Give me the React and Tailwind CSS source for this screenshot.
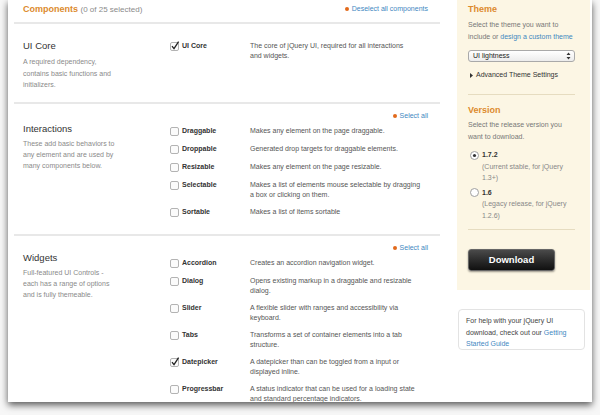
import React from 'react';

const interactions = [
  { name: 'Draggable', desc: ['Makes any element on the page draggable.'] },
  { name: 'Droppable', desc: ['Generated drop targets for draggable elements.'] },
  { name: 'Resizable', desc: ['Makes any element on the page resizable.'] },
  { name: 'Selectable', desc: ['Makes a list of elements mouse selectable by dragging', 'a box or clicking on them.'] },
  { name: 'Sortable', desc: ['Makes a list of items sortable'] },
];

const widgets = [
  { name: 'Accordion', desc: ['Creates an accordion navigation widget.'] },
  { name: 'Dialog', desc: ['Opens existing markup in a draggable and resizable', 'dialog.'] },
  { name: 'Slider', desc: ['A flexible slider with ranges and accessibility via', 'keyboard.'] },
  { name: 'Tabs', desc: ['Transforms a set of container elements into a tab', 'structure.'] },
  { name: 'Datepicker', checked: true, desc: ['A datepicker than can be toggled from a input or', 'displayed inline.'] },
  { name: 'Progressbar', desc: ['A status indicator that can be used for a loading state', 'and standard percentage indicators.'] },
];

const Checkbox = ({ checked }) => (
  <svg width="10" height="10" viewBox="0 0 10 10" className="shrink-0">
    <rect x="0.5" y="1.5" width="8" height="8" rx="1.5" fill="#fbfbfb" stroke="#b3b3b3" />
    {checked && <path d="M2 5.2 L4 7.6 L8.6 0.6" fill="none" stroke="#222" strokeWidth="1.3" />}
  </svg>
);

const Radio = ({ checked }) => (
  <svg width="9" height="9" viewBox="0 0 9 9" className="shrink-0">
    <circle cx="4.5" cy="4.5" r="4" fill="#fff" stroke="#a0a0a0" />
    {checked && <circle cx="4.5" cy="4.5" r="1.6" fill="#333" />}
  </svg>
);

const Item = ({ item }) => (
  <div className="flex items-start min-h-[11px]">
    <div className="w-[80px] h-[10px] flex items-center gap-[2px]">
      <Checkbox checked={item.checked} />
      <span className="font-bold text-[#333] text-[7px]">{item.name}</span>
    </div>
    <div className="leading-[10px] text-[#555] whitespace-nowrap">
      {item.desc.map((d) => (
        <div key={d}>{d}</div>
      ))}
    </div>
  </div>
);

const SelectAll = ({ label }) => (
  <div className="h-[10px] flex items-center justify-end gap-[3px] pr-[12px]">
    <span className="w-[4px] h-[4px] rounded-full bg-[#e2691b]" />
    <span className="text-[#3f88bf] leading-[10px]">{label}</span>
  </div>
);

const Divider = () => <div className="h-[2px] bg-[#e8e8e8]" />;

export default function App() {
  return (
    <div className="w-[600px] h-[415px] bg-[#f7f7f7] overflow-hidden font-['Liberation_Sans',Arial,sans-serif] text-[7px]">
      <div className="ml-[8px] w-[584px] h-[402px] bg-white shadow-[0_3px_7px_rgba(0,0,0,0.65)] flex overflow-hidden">
        {/* Main column */}
        <div className="w-[449px] pl-[6px]">
          <div className="w-[426px]">
            <div className="h-[22px] pl-[9px] flex justify-between items-start pt-[3px]">
              <div className="text-[9px] leading-[12px]">
                <span className="font-bold text-[#dc8a2e]">Components</span>{' '}
                <span className="text-[#8a8a8a] text-[8px]">(0 of 25 selected)</span>
              </div>
              <div className="pt-[1px]">
                <SelectAll label="Deselect all components" />
              </div>
            </div>
            <Divider />

            {/* UI Core */}
            <div className="h-[78px] pt-[16px] flex">
              <div className="w-[156px] pl-[9px]">
                <div className="text-[9.5px] leading-[12px] text-[#333]">UI Core</div>
                <div className="mt-[4px] leading-[11.5px] text-[#8a8a8a]">
                  A required dependency,<br />contains basic functions and<br />initializers.
                </div>
              </div>
              <div className="pt-px">
                <Item item={{ name: 'UI Core', checked: true, desc: ['The core of jQuery UI, required for all interactions', 'and widgets.'] }} />
              </div>
            </div>
            <Divider />

            {/* Interactions */}
            <div className="h-[130px] pt-[7px]">
              <SelectAll label="Select all" />
              <div className="mt-[2px] flex">
                <div className="w-[156px] pl-[9px]">
                  <div className="text-[9.5px] leading-[12px] text-[#333]">Interactions</div>
                  <div className="mt-[3px] leading-[11px] text-[#8a8a8a]">
                    These add basic behaviors to<br />any element and are used by<br />many components below.
                  </div>
                </div>
                <div className="pt-[3px] flex flex-col gap-[7px]">
                  {interactions.map((it) => (
                    <Item key={it.name} item={it} />
                  ))}
                </div>
              </div>
            </div>
            <Divider />

            {/* Widgets */}
            <div className="pt-[7px]">
              <SelectAll label="Select all" />
              <div className="-mt-[1px] flex">
                <div className="w-[156px] pl-[9px]">
                  <div className="text-[9.5px] leading-[12px] text-[#333]">Widgets</div>
                  <div className="mt-[3px] leading-[11px] text-[#8a8a8a]">
                    Full-featured UI Controls -<br />each has a range of options<br />and is fully themeable.
                  </div>
                </div>
                <div className="pt-[6px] flex flex-col gap-[7px]">
                  {widgets.map((it) => (
                    <Item key={it.name} item={it} />
                  ))}
                </div>
              </div>
            </div>
          </div>
        </div>

        {/* Sidebar */}
        <div className="w-[133px]">
          <div className="h-[290px] bg-[#fcf6e4] pl-[11px] pr-[15px] pt-[3px]">
            <div className="text-[9px] leading-[12px] font-bold text-[#dc8a2e]">Theme</div>
            <div className="mt-[4px] leading-[12px] text-[#777]">
              Select the theme you want to<br />include or{' '}
              <span className="text-[#3f88bf]">design a custom theme</span>
            </div>
            <div className="mt-[7px] h-[12px] rounded-[3px] border border-[#a9a9a9] bg-gradient-to-b from-white to-[#ececec] flex items-center justify-between pl-[4px] pr-[3px]">
              <span className="text-[#222] leading-[10px]">UI lightness</span>
              <svg width="5" height="8" viewBox="0 0 5 8">
                <path d="M0.5 3 L2.5 0.5 L4.5 3 Z M0.5 5 L2.5 7.5 L4.5 5 Z" fill="#333" />
              </svg>
            </div>
            <div className="mt-[7px] h-[12px] flex items-center gap-[3px] pl-[2px] text-[#333]">
              <svg width="3" height="5" viewBox="0 0 3 5">
                <path d="M0 0 L3 2.5 L0 5 Z" fill="#333" />
              </svg>
              <span>Advanced Theme Settings</span>
            </div>
            <div className="mt-[13px] h-px bg-[#e6dcc0]" />
            <div className="mt-[9px] text-[9px] leading-[12px] font-bold text-[#dc8a2e]">Version</div>
            <div className="mt-[3px] leading-[12px] text-[#777]">
              Select the release version you<br />want to download.
            </div>
            <div className="mt-[6px] flex gap-[3px]">
              <div className="pt-[1.5px] pl-[2px]">
                <Radio checked />
              </div>
              <div className="leading-[11.5px]">
                <div className="font-bold text-[#333]">1.7.2</div>
                <div className="text-[#888]">(Current stable, for jQuery<br />1.3+)</div>
              </div>
            </div>
            <div className="mt-[3px] flex gap-[3px]">
              <div className="pt-[1.5px] pl-[2px]">
                <Radio />
              </div>
              <div className="leading-[11.5px]">
                <div className="font-bold text-[#333]">1.6</div>
                <div className="text-[#888]">(Legacy release, for jQuery<br />1.2.6)</div>
              </div>
            </div>
            <div className="mt-[8px] h-px bg-[#e6dcc0]" />
            <button className="mt-[19px] w-[87px] h-[22px] rounded-[3px] border border-[#666] bg-gradient-to-b from-[#4a4a4a] to-[#111] text-white font-bold text-[9.5px] shadow-[0_1px_2px_rgba(0,0,0,0.4)]">
              Download
            </button>
          </div>
          <div className="mt-[19px] ml-px w-[127px] h-[41px] rounded-[4px] border border-[#e3e3e3] pl-[7px] pt-[5px] leading-[11.5px] text-[#444]">
            For help with your jQuery UI<br />download, check out our{' '}
            <span className="text-[#3f88bf]">Getting</span>
            <br />
            <span className="text-[#3f88bf]">Started Guide</span>
          </div>
        </div>
      </div>
    </div>
  );
}
